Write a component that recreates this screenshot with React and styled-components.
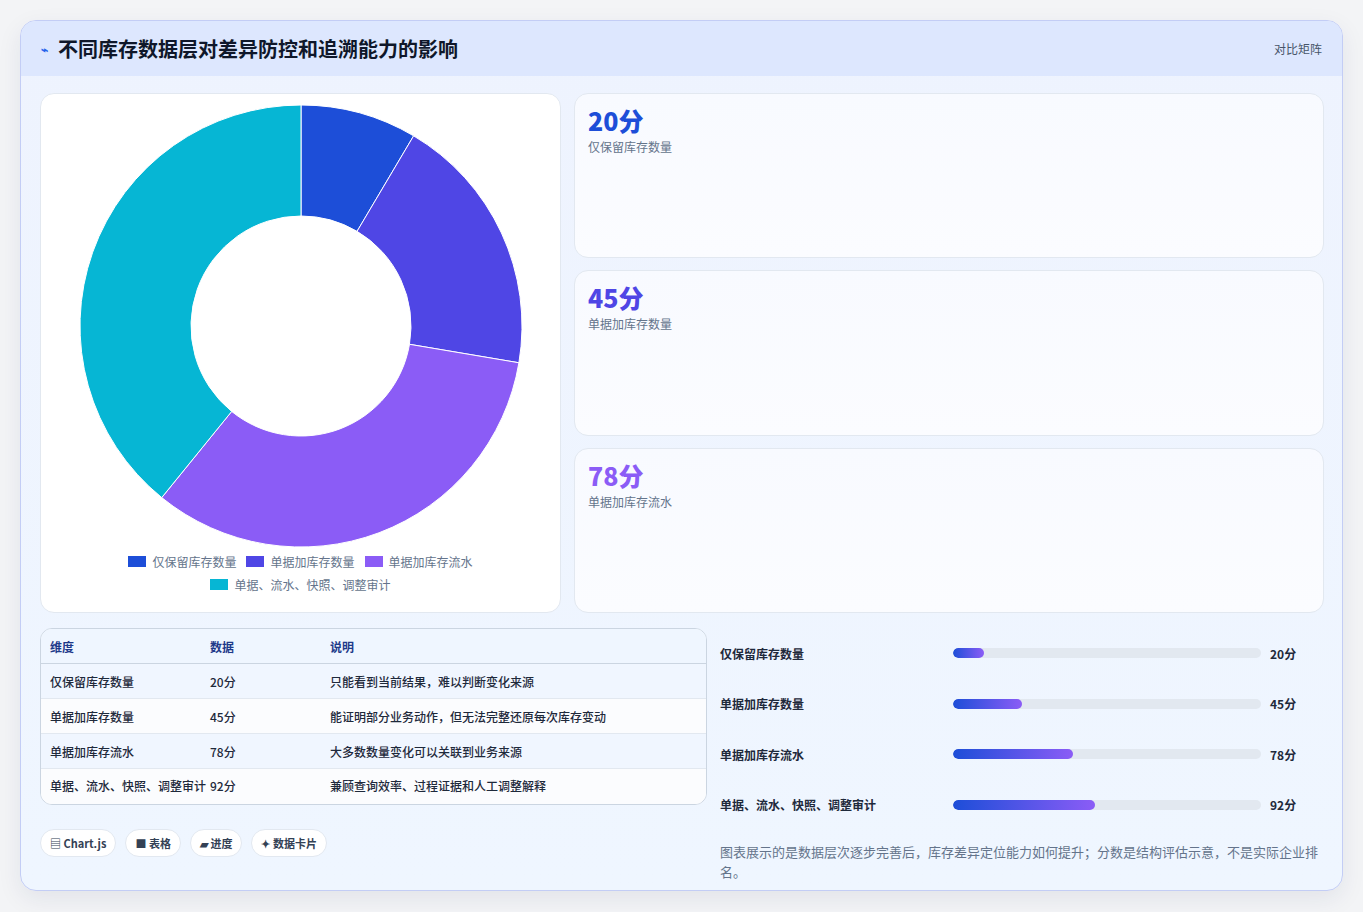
import React from "react";
import styled, { createGlobalStyle } from "styled-components";

const G = createGlobalStyle`
  body{margin:0;background:#f3f4f6;font-family:"Noto Sans CJK SC","Noto Sans",sans-serif;}
  *{box-sizing:border-box;}
`;
const Page = styled.div`padding:20px 20px 21px 20px;height:912px;`;
const Card = styled.div`
  width:1323px;height:871px;border:1px solid #c3cdf5;border-radius:16px;overflow:hidden;
  background:linear-gradient(180deg,#eef3fe,#eff6ff);box-shadow:0 8px 24px rgba(30,40,90,.08);
  display:flex;flex-direction:column;`;
const Header = styled.div`
  height:55px;background:#dde7fe;display:flex;align-items:center;justify-content:space-between;padding:0 20px;`;
const Title = styled.h1`margin:0;font-size:20px;font-weight:700;color:#0f172a;display:flex;align-items:center;gap:10px;`;
const Spark = styled.span`color:#2563eb;font-size:12px;`;
const Tag = styled.span`font-size:12px;color:#475569;`;
const Body = styled.div`padding:17px 19px 0 19px;display:flex;flex-direction:column;gap:15px;`;
const Top = styled.div`display:grid;grid-template-columns:521px 750px;gap:13px;height:520px;`;
const Panel = styled.div`background:#fff;border:1px solid #e2e8f0;border-radius:14px;display:flex;flex-direction:column;align-items:center;padding-top:11px;`;
const Legend = styled.div`display:flex;flex-wrap:wrap;justify-content:center;gap:6px 10px;width:380px;margin-top:6px;font-size:12px;color:#64748b;`;
const LItem = styled.span`display:flex;align-items:center;gap:6px;`;
const Box = styled.i`width:18px;height:11px;background:${p=>p.c};display:inline-block;`;
const Stats = styled.div`display:grid;grid-template-rows:repeat(3,1fr);gap:12px;`;
const Stat = styled.div`background:linear-gradient(180deg,#f8faff,#fbfcff);border:1px solid #e2e8f0;border-radius:14px;padding:10px 13px;`;
const Num = styled.div`font-size:25px;font-weight:800;color:${p=>p.c};line-height:32px;`;
const Lab = styled.div`font-size:12px;color:#64748b;margin-top:2px;`;
const Bottom = styled.div`display:grid;grid-template-columns:667px 1fr;gap:13px;`;
const Left = styled.div`display:flex;flex-direction:column;gap:24px;`;
const Table = styled.div`border:1px solid #cbd5e1;border-radius:12px;overflow:hidden;background:#fff;`;
const Row = styled.div`display:grid;grid-template-columns:160px 120px 1fr;padding:0 9px;min-height:35px;align-items:${p=>p.top?"start":"center"};
  padding-top:${p=>p.top?"8px":"0"};padding-bottom:${p=>p.top?"8px":"0"};
  background:${p=>p.h?"#eff6ff":p.alt?"#f0f6ff":"#fbfcfe"};border-bottom:${p=>p.last?"none":"1px solid #e2e8f0"};
  font-size:12px;color:${p=>p.h?"#1e3a8a":"#1e293b"};font-weight:${p=>p.h?600:500};height:${p=>p.h?"33px":"auto"};
  ${p=>p.h&&"border-bottom:1px solid #cbd5e1;"}`;
const Chips = styled.div`display:flex;gap:9px;`;
const Chip = styled.span`height:28px;padding:0 9px;border:1px solid #e2e8f0;background:#fff;border-radius:14px;font-size:11px;font-weight:600;color:#334155;display:flex;align-items:center;gap:3px;`;
const Right = styled.div`padding:0 0 0 0;display:flex;flex-direction:column;`;
const BarRow = styled.div`display:grid;grid-template-columns:224px 308px 1fr;gap:9px;align-items:center;height:50.5px;font-size:12px;font-weight:600;color:#1e293b;`;
const Track = styled.div`height:10px;border-radius:5px;background:#e2e8f0;overflow:hidden;`;
const Fill = styled.div`height:100%;border-radius:5px;background:linear-gradient(90deg,#1d4ed8,#8b5cf6);`;
const Note = styled.p`margin:12px 0 0;font-size:13px;line-height:20px;color:#64748b;`;

const data=[["仅保留库存数量",20,"只能看到当前结果，难以判断变化来源","#1d4ed8"],["单据加库存数量",45,"能证明部分业务动作，但无法完整还原每次库存变动","#4f46e5"],["单据加库存流水",78,"大多数数量变化可以关联到业务来源","#8b5cf6"],["单据、流水、快照、调整审计",92,"兼顾查询效率、过程证据和人工调整解释","#06b6d4"]];

function Donut(){
  const cx=221,cy=221,R=221,r=110,tot=235;let a=0;
  const pt=(ang,rad)=>[cx+rad*Math.sin(ang),cy-rad*Math.cos(ang)];
  return <svg width="442" height="442">{data.map(([n,v,, c])=>{
    const a0=a,a1=a+v/tot*2*Math.PI;a=a1;const L=a1-a0>Math.PI?1:0;
    const [x0,y0]=pt(a0,R),[x1,y1]=pt(a1,R),[x2,y2]=pt(a1,r),[x3,y3]=pt(a0,r);
    return <path key={n} fill={c} stroke="#fff" strokeWidth="1" d={`M${x0} ${y0}A${R} ${R} 0 ${L} 1 ${x1} ${y1}L${x2} ${y2}A${r} ${r} 0 ${L} 0 ${x3} ${y3}Z`}/>;
  })}</svg>;
}

export default function App(){
  return <Page><G/><Card>
    <Header><Title><Spark>⌁</Spark>不同库存数据层对差异防控和追溯能力的影响</Title><Tag>对比矩阵</Tag></Header>
    <Body>
      <Top>
        <Panel><Donut/><Legend>{data.map(d=><LItem key={d[0]}><Box c={d[3]}/>{d[0]}</LItem>)}</Legend></Panel>
        <Stats>{data.slice(0,3).map(d=><Stat key={d[0]}><Num c={d[3]}>{d[1]}分</Num><Lab>{d[0]}</Lab></Stat>)}</Stats>
      </Top>
      <Bottom>
        <Left>
          <Table>
            <Row h><span>维度</span><span>数据</span><span>说明</span></Row>
            {data.map((d,i)=><Row key={d[0]} alt={i%2===0} last={i===3} top={i===3}><span>{d[0]}</span><span>{d[1]}分</span><span>{d[2]}</span></Row>)}
          </Table>
          <Chips><Chip>▤ Chart.js</Chip><Chip>■ 表格</Chip><Chip>▰ 进度</Chip><Chip>✦ 数据卡片</Chip></Chips>
        </Left>
        <Right>
          {data.map(d=><BarRow key={d[0]}><span>{d[0]}</span><Track><Fill style={{width:`${d[1]/2}%`}}/></Track><span>{d[1]}分</span></BarRow>)}
          <Note>图表展示的是数据层次逐步完善后，库存差异定位能力如何提升；分数是结构评估示意，不是实际企业排名。</Note>
        </Right>
      </Bottom>
    </Body>
  </Card></Page>;
}
